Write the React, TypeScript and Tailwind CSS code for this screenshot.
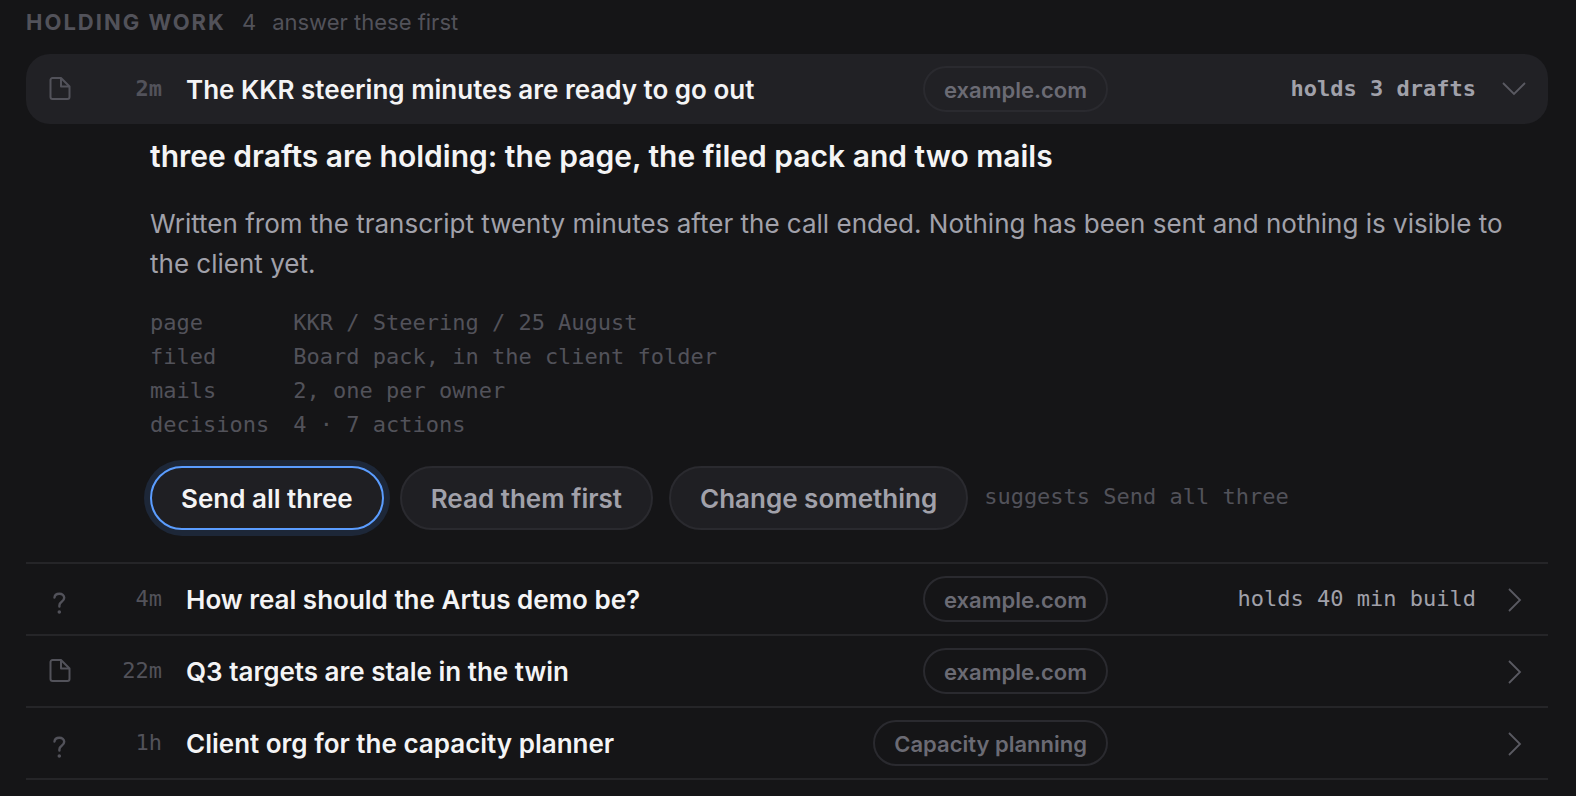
import { useState } from "react";
import clsx from "clsx";

type WorkItem = {
  id: string;
  kind: "document" | "question";
  age: string;
  title: string;
  tag: string;
  holds?: string;
};

type RowProps = {
  item: WorkItem;
  isOpen: boolean;
  onToggle: () => void;
};

const items: WorkItem[] = [
  {
    id: "kkr",
    kind: "document",
    age: "2m",
    title: "The KKR steering minutes are ready to go out",
    tag: "example.com",
    holds: "holds 3 drafts",
  },
  {
    id: "artus",
    kind: "question",
    age: "4m",
    title: "How real should the Artus demo be?",
    tag: "example.com",
    holds: "holds 40 min build",
  },
  {
    id: "targets",
    kind: "document",
    age: "22m",
    title: "Q3 targets are stale in the twin",
    tag: "example.com",
  },
  {
    id: "capacity",
    kind: "question",
    age: "1h",
    title: "Client org for the capacity planner",
    tag: "Capacity planning",
  },
];

const facts = [
  { label: "page", value: "KKR / Steering / 25 August" },
  { label: "filed", value: "Board pack, in the client folder" },
  { label: "mails", value: "2, one per owner" },
  { label: "decisions", value: "4 · 7 actions" },
];

const answers = ["Send all three", "Read them first", "Change something"];

const DocumentIcon = () => (
  <svg width="24" height="28" viewBox="0 0 24 28" fill="none" stroke="currentColor" strokeWidth="2" strokeLinejoin="round">
    <path d="M4.500 3h8.500l8.500 8.500v10.500a2 2 0 0 1-2 2H4.500a2 2 0 0 1-2-2V5a2 2 0 0 1 2-2z" />
    <path d="M13 3v8.500h8.500" />
  </svg>
);

const QuestionIcon = () => (
  <svg width="24" height="36" viewBox="0 0 24 36" fill="none" stroke="currentColor" strokeWidth="2.400" strokeLinecap="round">
    <path d="M6.500 16.500c.2-2.300 2.100-3.800 4.800-3.800 2.900 0 4.900 1.700 4.900 4.100 0 1.800-.9 2.900-2.500 3.900-1.600 1.100-2.300 1.900-2.300 3.700v1.200" />
    <circle cx="11.300" cy="31" r="1.800" fill="currentColor" stroke="none" />
  </svg>
);

const Chevron = ({ isOpen }: { isOpen: boolean }) => (
  <svg
    width="26"
    height="28"
    viewBox="0 0 26 28"
    fill="none"
    stroke="currentColor"
    strokeWidth="1.8"
    className="shrink-0 text-[#5a5a62]"
  >
    <path d={isOpen ? "M3 8l11 11 11-11" : "M9 4l11 11-11 11"} />
  </svg>
);

const Row = ({ item, isOpen, onToggle }: RowProps) => {
  return (
    <button
      onClick={onToggle}
      aria-expanded={isOpen}
      className={clsx(
        "flex h-[70px] w-full items-center px-[22px] text-left cursor-pointer",
        isOpen && "rounded-3xl bg-[#212125]"
      )}
    >
      <span className="w-6 shrink-0 text-[#52525a]">
        {item.kind === "document" ? <DocumentIcon /> : <QuestionIcon />}
      </span>
      <span
        className={clsx(
          "w-[90px] shrink-0 pb-0.5 text-right font-['DejaVu_Sans_Mono',monospace] text-[22px] text-[#52525a]",
          isOpen && "font-bold"
        )}
      >
        {item.age}
      </span>
      <span className="ml-6 min-w-0 flex-1 truncate text-[26px] font-semibold text-[#f4f4f5]">
        {item.title}
      </span>
      <span className="flex h-[46px] shrink-0 items-center rounded-full border-2 border-[#2a2a2f] px-[19px] pt-0.5 text-[22px] font-semibold text-[#6b6b74]">
        {item.tag}
      </span>
      <span
        className={clsx(
          "w-[368px] shrink-0 pb-0.5 text-right font-['DejaVu_Sans_Mono',monospace] text-[22px] text-[#a1a1aa]",
          isOpen && "font-bold"
        )}
      >
        {item.holds}
      </span>
      <span className="ml-6 shrink-0">
        <Chevron isOpen={isOpen} />
      </span>
    </button>
  );
};

const Detail = () => {
  const [answer, setAnswer] = useState(answers[0]);

  return (
    <div className="pt-3 pr-10 pb-8 pl-[124px]">
      <h2 className="text-[30px] leading-10 font-semibold text-[#f4f4f5]">
        three drafts are holding: the page, the filed pack and two mails
      </h2>
      <p className="mt-7 text-[26px] leading-10 text-[#a1a1aa]">
        Written from the transcript twenty minutes after the call ended. Nothing has been sent and
        nothing is visible to the client yet.
      </p>
      <dl className="mt-[22px] grid grid-cols-[auto_1fr] gap-x-6 font-['DejaVu_Sans_Mono',monospace] text-[22px] leading-[34px] text-[#52525a]">
        {facts.map((fact) => (
          <div key={fact.label} className="contents">
            <dt>{fact.label}</dt>
            <dd>{fact.value}</dd>
          </div>
        ))}
      </dl>
      <div className="mt-6 flex flex-wrap items-center gap-4">
        {answers.map((label) => (
          <button
            key={label}
            onClick={() => setAnswer(label)}
            className={clsx(
              "h-16 rounded-full border-2 bg-[#1f1f23] px-[29px] text-[26px] font-semibold cursor-pointer",
              label === answer
                ? "border-[#5b9dff] text-[#f4f4f5] ring-6 ring-[#1d2738]"
                : "border-[#2a2a2f] text-[#a1a1aa]"
            )}
          >
            {label}
          </button>
        ))}
        <span className="pb-1 font-['DejaVu_Sans_Mono',monospace] text-[22px] text-[#52525a]">
          suggests {answers[0]}
        </span>
      </div>
    </div>
  );
};

const App = () => {
  const [openId, setOpenId] = useState("kkr");

  return (
    <main className="min-h-screen bg-[#151517] pt-[5px] pr-7 pl-[26px] font-['Inter',sans-serif]">
      <header className="flex items-center gap-4 pb-[15px] text-[22px] leading-[34px] text-[#52525a]">
        <h1 className="font-bold tracking-[2px]">HOLDING WORK</h1>
        <span>4</span>
        <span>answer these first</span>
      </header>
      <ul>
        {items.map((item) => (
          <li key={item.id} className="border-b-2 border-[#252528]">
            <Row
              item={item}
              isOpen={item.id === openId}
              onToggle={() => setOpenId(item.id === openId ? "" : item.id)}
            />
            {item.id === openId && <Detail />}
          </li>
        ))}
      </ul>
    </main>
  );
};

export default App;
